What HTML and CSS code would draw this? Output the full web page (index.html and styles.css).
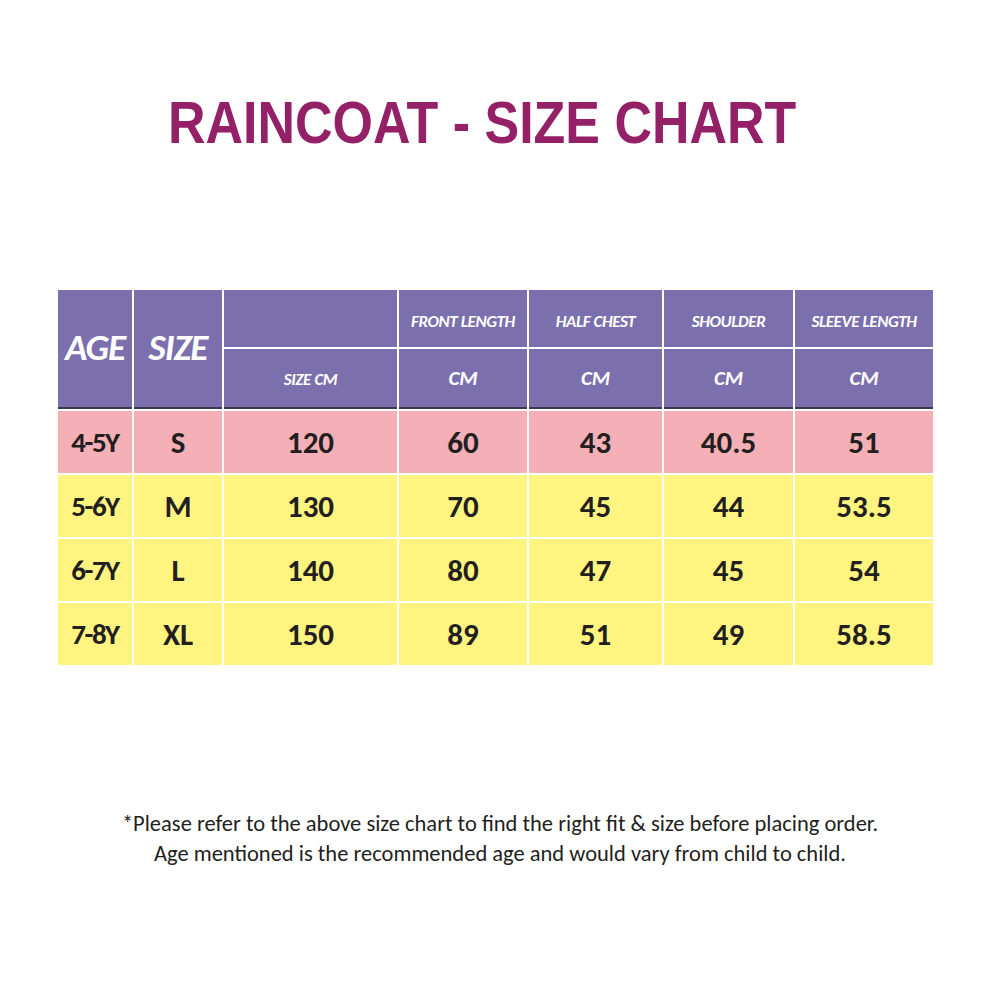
FILE: index.html
```html
<!DOCTYPE html>
<html>
<head>
<meta charset="utf-8">
<link rel="stylesheet" href="styles.css">
</head>
<body>
<div class="page">
  <h1 class="title">RAINCOAT - SIZE CHART</h1>
  <div class="chart">
    <div class="cell head big span2">AGE</div>
    <div class="cell head big span2">SIZE</div>
    <div class="cell head"></div>
    <div class="cell head small">FRONT LENGTH</div>
    <div class="cell head small">HALF CHEST</div>
    <div class="cell head small">SHOULDER</div>
    <div class="cell head small">SLEEVE LENGTH</div>
    <div class="cell head sub small2">SIZE CM</div>
    <div class="cell head sub unit">CM</div>
    <div class="cell head sub unit">CM</div>
    <div class="cell head sub unit">CM</div>
    <div class="cell head sub unit">CM</div>

    <div class="cell pink age">4-5Y</div>
    <div class="cell pink">S</div>
    <div class="cell pink">120</div>
    <div class="cell pink">60</div>
    <div class="cell pink">43</div>
    <div class="cell pink">40.5</div>
    <div class="cell pink">51</div>

    <div class="cell yellow age">5-6Y</div>
    <div class="cell yellow">M</div>
    <div class="cell yellow">130</div>
    <div class="cell yellow">70</div>
    <div class="cell yellow">45</div>
    <div class="cell yellow">44</div>
    <div class="cell yellow">53.5</div>

    <div class="cell yellow age">6-7Y</div>
    <div class="cell yellow">L</div>
    <div class="cell yellow">140</div>
    <div class="cell yellow">80</div>
    <div class="cell yellow">47</div>
    <div class="cell yellow">45</div>
    <div class="cell yellow">54</div>

    <div class="cell yellow age">7-8Y</div>
    <div class="cell yellow">XL</div>
    <div class="cell yellow">150</div>
    <div class="cell yellow">89</div>
    <div class="cell yellow">51</div>
    <div class="cell yellow">49</div>
    <div class="cell yellow">58.5</div>
  </div>
  <div class="note">
    <p>*Please refer to the above size chart to find the right fit &amp; size before placing order.</p>
    <p>Age mentioned is the recommended age and would vary from child to child.</p>
  </div>
</div>
</body>
</html>
```
FILE: styles.css
```css
html, body {
  margin: 0;
  padding: 0;
  background: #ffffff;
}
.page {
  width: 1000px;
  height: 1000px;
  display: flex;
  flex-direction: column;
  align-items: flex-start;
  font-family: "Carlito", "Open Sans", "Noto Sans", sans-serif;
  color: #231f20;
}
.title {
  margin: 88px 0 0 168px;
  font-family: "Liberation Sans", Arial, sans-serif;
  font-weight: bold;
  font-size: 60px;
  line-height: 70px;
  color: #942068;
  white-space: nowrap;
  transform: scaleX(0.866);
  transform-origin: left center;
}
.chart {
  margin: 132px 0 0 58px;
  display: grid;
  grid-template-columns: 74px 88px 173px 128px 133px 129px 138px;
  grid-template-rows: 57px 60px 62px 62px 62px 62px;
  gap: 2px;
  background: #ffffff;
}
.cell {
  display: flex;
  align-items: center;
  justify-content: center;
  font-weight: bold;
  font-size: 31px;
  white-space: nowrap;
}
.head {
  background: #7b6fae;
  color: #ffffff;
  font-style: italic;
}
.span2 {
  grid-row: span 2;
  box-shadow: inset 0 -2px 0 #3b3550;
}
.sub {
  box-shadow: inset 0 -2px 0 #3b3550;
}
.big {
  font-size: 37px;
  letter-spacing: -1px;
  padding-bottom: 4px;
}
.small {
  font-size: 17px;
  font-weight: 600;
  letter-spacing: -0.4px;
  padding-top: 5px;
}
.small2 {
  font-size: 17px;
  font-weight: 600;
  letter-spacing: -0.4px;
  padding-top: 0;
}
.unit {
  font-size: 21px;
  font-weight: 600;
  padding-bottom: 2px;
}
.pink {
  background: #f4b0b6;
}
.yellow {
  background: #fff47f;
}
.age {
  letter-spacing: -1.5px;
  font-size: 29px;
}
.note {
  margin-top: 144px;
  width: 1000px;
  text-align: center;
  font-size: 22.5px;
  line-height: 30px;
  color: #231f20;
}
.note p {
  margin: 0;
}
```
